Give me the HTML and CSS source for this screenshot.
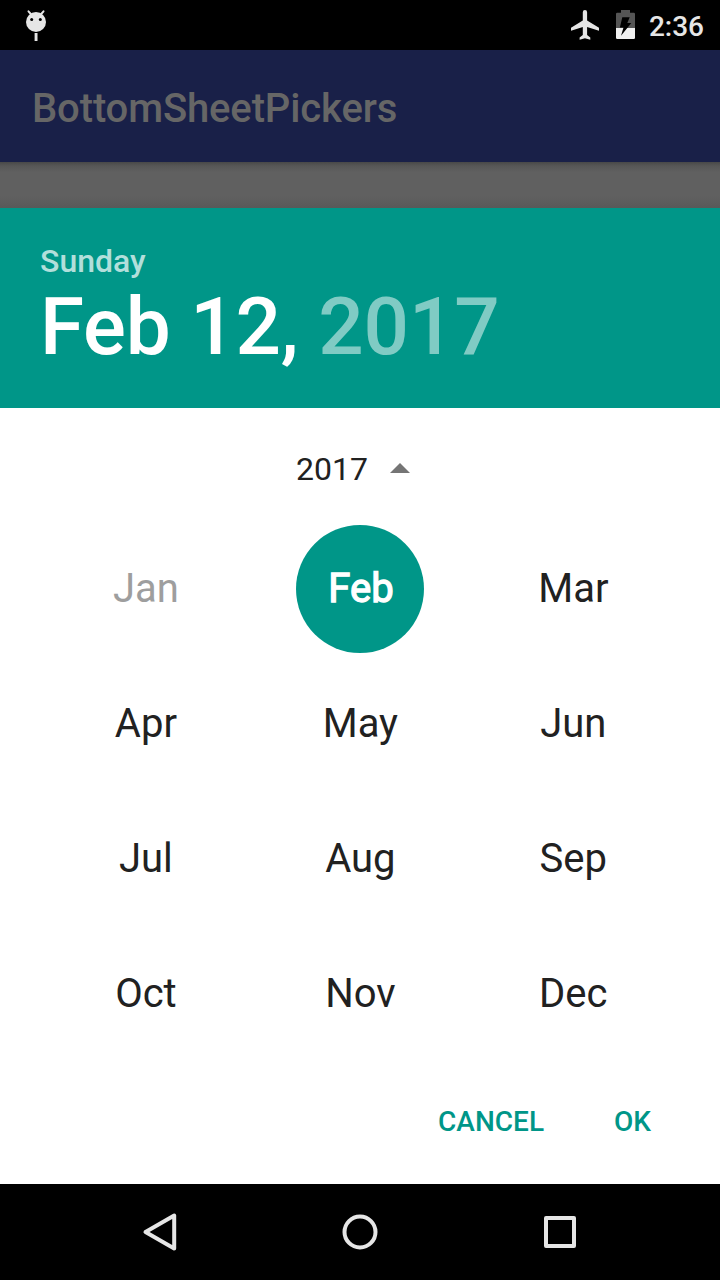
FILE: index.html
```html
<!DOCTYPE html>
<html lang="en">
<head>
<meta charset="utf-8">
<title>BottomSheetPickers</title>
<link rel="stylesheet" href="styles.css">
</head>
<body>
<div class="screen">
  <div class="status-bar">
    <svg class="debug-icon" width="24" height="34" viewBox="0 0 24 34">
      <path d="M4.500 3.300l3.200 3.700M19.500 3.300l-3.200 3.700" stroke="#e6e6e6" stroke-width="2" stroke-linecap="round"/>
      <circle cx="12" cy="14" r="10" fill="#e6e6e6"/>
      <circle cx="7.700" cy="11.500" r="1.500" fill="#000"/>
      <circle cx="16.300" cy="11.500" r="1.500" fill="#000"/>
      <path d="M10.600 25h2.900v8h-2.900z" fill="#e6e6e6"/>
    </svg>
    <div class="status-right">
      <svg class="plane-icon" width="30" height="34" viewBox="0 0 30 34">
        <path d="M29 22.700v-2.900L17.100 12.600V4.200a2.150 2.150 0 0 0-4.300 0v8.400L1 19.800v2.900l11.800-3.600v7.800L9.600 29.400v2.300l5.350-1.400 5.350 1.400v-2.300l-3.200-2.500v-7.800z" fill="#e6e6e6"/>
      </svg>
      <svg class="battery-icon" width="19" height="30" viewBox="0 0 19 30">
        <path d="M0 4a1.200 1.200 0 0 1 1.200-1.200H5V0h9v2.800h3.800A1.200 1.200 0 0 1 19 4v14H0z" fill="#555"/>
        <path d="M0 18h19v9.800a1.200 1.200 0 0 1-1.200 1.200H1.200A1.200 1.200 0 0 1 0 27.800z" fill="#f0f0f0"/>
        <path d="M6.300 7.300h7.400L11.300 13h4L5 25.700l2.500-8.200H3.900z" fill="#000"/>
      </svg>
      <span class="clock">2:36</span>
    </div>
  </div>
  <div class="app-bar">BottomSheetPickers</div>
  <div class="backdrop"></div>
  <div class="sheet">
    <div class="sheet-header">
      <div class="weekday">Sunday</div>
      <div class="date">Feb 12, <span class="date-year">2017</span></div>
    </div>
    <div class="year-row">
      <span>2017</span>
      <svg width="20" height="12" viewBox="0 0 20 12"><path d="M0 10L10 0l10 10z" fill="#757575"/></svg>
    </div>
    <div class="months">
      <div class="month disabled">Jan</div>
      <div class="month selected"><span class="bubble">Feb</span></div>
      <div class="month">Mar</div>
      <div class="month">Apr</div>
      <div class="month">May</div>
      <div class="month">Jun</div>
      <div class="month">Jul</div>
      <div class="month">Aug</div>
      <div class="month">Sep</div>
      <div class="month">Oct</div>
      <div class="month">Nov</div>
      <div class="month">Dec</div>
    </div>
    <div class="actions">
      <span>CANCEL</span>
      <span>OK</span>
    </div>
  </div>
  <div class="nav-bar">
    <svg width="40" height="40" viewBox="0 0 40 40"><path d="M5.500 20L34.200 3.500v33z"/></svg>
    <svg width="40" height="40" viewBox="0 0 40 40"><circle cx="20" cy="20" r="15.500"/></svg>
    <svg width="40" height="40" viewBox="0 0 40 40"><rect x="6" y="6" width="28" height="28"/></svg>
  </div>
</div>
</body>
</html>
```

FILE: styles.css
```css
* {
  box-sizing: border-box;
}

body {
  margin: 0;
  font-family: Roboto, sans-serif;
  color: #212121;
}

svg {
  display: block;
}

.screen {
  width: 720px;
  height: 1280px;
  display: flex;
  flex-direction: column;
  overflow: hidden;
  background: #000;
}

.status-bar {
  height: 50px;
  flex: none;
  display: flex;
  justify-content: space-between;
  padding: 8px 16px 0 24px;
}

.status-right {
  display: flex;
  align-items: flex-start;
}

.plane-icon {
  margin-right: 16px;
}

.battery-icon {
  margin: 2px 14px 0 0;
}

.clock {
  font-size: 28px;
  line-height: 38px;
  font-weight: 500;
  color: #e6e6e6;
}

.app-bar {
  height: 112px;
  flex: none;
  padding: 3px 32px 0;
  line-height: 112px;
  font-size: 40px;
  font-weight: 500;
  letter-spacing: -0.13px;
  color: #666;
  background: #192048;
}

.backdrop {
  height: 46px;
  flex: none;
  background: linear-gradient(#484848, #575757 4px, #606060 10px, #606060 34px, #595959);
}

.sheet {
  height: 976px;
  flex: none;
  display: flex;
  flex-direction: column;
  background: #fff;
}

.sheet-header {
  height: 200px;
  padding: 34px 40px 0;
  background: #009688;
  color: #fff;
}

.weekday {
  font-size: 32px;
  line-height: 38px;
  font-weight: 500;
  color: #b2dfdb;
}

.date {
  font-size: 80px;
  line-height: 94px;
  font-weight: 500;
  letter-spacing: -0.17px;
}

.date-year {
  color: #80cbc4;
}

.year-row {
  height: 113px;
  padding: 8px 0 0 296px;
  display: flex;
  align-items: center;
  gap: 22px;
  font-size: 32px;
}

.months {
  padding: 0 40px;
  display: grid;
  grid-template-columns: repeat(3, 1fr);
  grid-auto-rows: 135px;
}

.month {
  display: flex;
  align-items: center;
  justify-content: center;
  font-size: 40px;
}

.month:nth-child(3n + 1) {
  padding-right: 1.5px;
}

.month:nth-child(3n + 2):not(.selected) {
  padding-left: 0.8px;
}

.disabled {
  color: #9e9e9e;
}

.bubble {
  width: 128px;
  height: 128px;
  padding-left: 2px;
  border-radius: 50%;
  background: #009688;
  color: #fff;
  line-height: 128px;
  text-align: center;
  -webkit-text-stroke: 1.3px #fff;
}

.actions {
  flex: 1;
  display: flex;
  justify-content: flex-end;
  align-items: center;
  gap: 70px;
  padding: 0 69px 2px 0;
  font-size: 28px;
  font-weight: 500;
  color: #009688;
}

.nav-bar {
  height: 96px;
  flex: none;
  display: flex;
  align-items: center;
  justify-content: center;
  gap: 160px;
}

.nav-bar svg {
  fill: none;
  stroke: #e6e6e6;
  stroke-width: 4;
  stroke-linejoin: round;
}
```
